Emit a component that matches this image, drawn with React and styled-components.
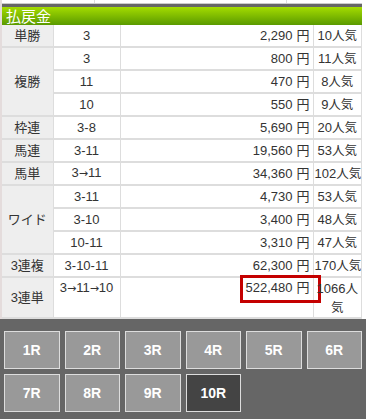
import React from "react";
import styled, { createGlobalStyle } from "styled-components";

const GlobalStyle = createGlobalStyle`
  html, body {
    margin: 0;
    padding: 0;
    background: #fff;
  }
  body {
    font-family: "Liberation Sans", "Noto Sans CJK JP", sans-serif;
    color: #333;
  }
`;

const Page = styled.div`
  width: 366px;
  height: 419px;
  overflow: hidden;
  display: flex;
  flex-direction: column;
`;

const Main = styled.div`
  width: 360px;
  border-left: 2px solid #e4dcdc;
`;

const CutRow = styled.div`
  display: grid;
  grid-template-columns: 93px 192px 1fr;
  height: 3px;
  border-bottom: 1px solid #ccc;
`;

const CutCell = styled.div`
  border-right: ${(p) => (p.$last ? "none" : "1px solid #ddd")};
`;

const DarkBar = styled.div`
  height: 3px;
  background: #666;
`;

const Title = styled.div`
  height: 18px;
  line-height: 18px;
  padding-left: 4px;
  background: linear-gradient(#a4dc00, #5a9a00);
  color: #fff;
  font-size: 15px;
  font-family: "Noto Sans CJK JP", sans-serif;
`;

const Table = styled.table`
  width: 100%;
  border-collapse: collapse;
  table-layout: fixed;
  font-size: 13px;
`;

const Td = styled.td`
  border: 1px solid #ddd;
  border-width: 0 1px 2px 0;
  height: 21px;
  padding: ${(p) => (p.$top ? "1px" : "0")} ${(p) => p.$pad ?? 3}px 0;
  line-height: 18px;
  vertical-align: ${(p) => (p.$top ? "top" : "middle")};
  text-align: ${(p) => p.$align || "center"};
  white-space: ${(p) => (p.$top ? "normal" : "nowrap")};
  position: relative;
`;

const Label = styled(Td)`
  background: #eee;
  vertical-align: middle;
  padding-top: 0;
`;

const Arrow = styled.span`
  font-family: "DejaVu Sans", sans-serif;
  font-size: 11px;
`;

const Yen = styled.span`
  margin-left: 4px;
`;

const Pop = styled.span`
  font-family: "Noto Sans CJK JP", sans-serif;
  font-size: 12.5px;
`;

const Highlight = styled.span`
  position: absolute;
  left: 119px;
  right: -8px;
  top: -3px;
  height: 22px;
  border: 3px solid #c40000;
  pointer-events: none;
`;

const Footer = styled.div`
  flex: 1;
  background: #666;
  padding: 12px 4px 0 4px;
`;

const Buttons = styled.div`
  width: 358px;
  display: grid;
  grid-template-columns: repeat(6, 1fr);
  gap: 5px 5px;
`;

const RaceButton = styled.div`
  height: 36px;
  line-height: 36px;
  text-align: center;
  border: 1px solid #ddd;
  background: ${(p) => (p.$active ? "#444" : "#999")};
  color: #fff;
  font-weight: bold;
  font-size: 14px;
  font-family: "Liberation Sans", sans-serif;
`;

const groups = [
  { label: "単勝", rows: [["3", "2,290", "10"]] },
  {
    label: "複勝",
    rows: [
      ["3", "800", "11"],
      ["11", "470", "8"],
      ["10", "550", "9"],
    ],
  },
  { label: "枠連", rows: [["3-8", "5,690", "20"]] },
  { label: "馬連", rows: [["3-11", "19,560", "53"]] },
  { label: "馬単", rows: [["3→11", "34,360", "102"]] },
  {
    label: "ワイド",
    rows: [
      ["3-11", "4,730", "53"],
      ["3-10", "3,400", "48"],
      ["10-11", "3,310", "47"],
    ],
  },
  { label: "3連複", rows: [["3-10-11", "62,300", "170"]] },
  { label: "3連単", rows: [["3→11→10", "522,480", "1066"]], top: true },
];

const races = ["1R", "2R", "3R", "4R", "5R", "6R", "7R", "8R", "9R", "10R"];

function Combo({ text }) {
  const parts = text.split("→");
  return parts.map((p, i) => (
    <React.Fragment key={i}>
      {i > 0 && <Arrow>→</Arrow>}
      {p}
    </React.Fragment>
  ));
}

export default function App() {
  return (
    <Page>
      <GlobalStyle />
      <Main>
        <CutRow>
          <CutCell />
          <CutCell />
          <CutCell $last />
        </CutRow>
        <DarkBar />
        <Title>払戻金</Title>
        <Table>
          <colgroup>
            <col style={{ width: 51 }} />
            <col style={{ width: 67 }} />
            <col style={{ width: 193 }} />
            <col />
          </colgroup>
          <tbody>
            {groups.map((g) =>
              g.rows.map((r, i) => (
                <tr key={g.label + i}>
                  {i === 0 && <Label rowSpan={g.rows.length}>{g.label}</Label>}
                  <Td $top={g.top}>
                    <Combo text={r[0]} />
                  </Td>
                  <Td $top={g.top} $align="right">
                    {g.top && <Highlight />}
                    {r[1]}
                    <Yen>円</Yen>
                  </Td>
                  <Td $top={g.top} $pad={1}>
                    {r[2]}
                    <Pop>人気</Pop>
                  </Td>
                </tr>
              ))
            )}
          </tbody>
        </Table>
      </Main>
      <Footer>
        <Buttons>
          {races.map((r) => (
            <RaceButton key={r} $active={r === "10R"}>
              {r}
            </RaceButton>
          ))}
        </Buttons>
      </Footer>
    </Page>
  );
}
